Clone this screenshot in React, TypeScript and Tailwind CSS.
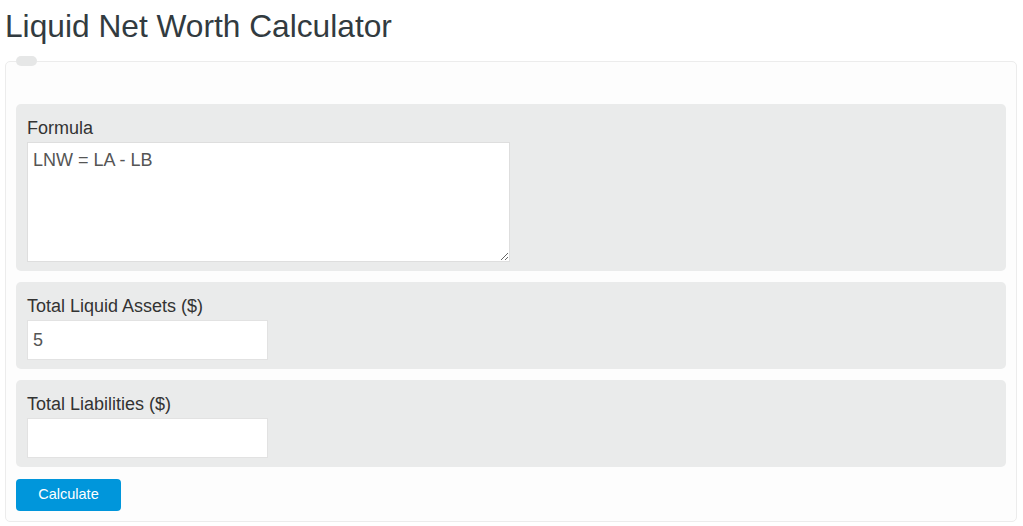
import React from "react";

export default function App() {
  const font = { fontFamily: '"Liberation Sans", Arial, sans-serif' };
  return (
    <div className="min-h-[526px] w-[1023px] bg-white pl-[5px]" style={font}>
      <h1 className="pt-[8px] text-[31.7px] leading-[37px] font-normal text-[#323b40]">
        Liquid Net Worth Calculator
      </h1>
      <div className="relative mt-[16px] w-[1012px] rounded-[5px] border border-[#ececec] bg-[#fdfdfd] px-[10px] pt-[42px] pb-[10px]">
        <div className="absolute left-[10px] top-[-6px] h-[10px] w-[21px] rounded-full bg-[#e6e7e7]" />
        <div className="flex flex-col gap-[11px]">
          <div className="rounded-[5px] bg-[#eaebeb] px-[11px] pt-[11px] pb-[9px]">
            <div className="text-[18px] leading-[27px] text-[#333]">Formula</div>
            <textarea
              className="block h-[120px] w-[483px] border border-[#dedede] bg-white px-[5px] py-[6px] text-[18px] leading-[23px] text-[#555] outline-none"
              style={font}
              defaultValue="LNW = LA - LB"
            />
          </div>
          <div className="rounded-[5px] bg-[#eaebeb] px-[11px] pt-[11px] pb-[9px]">
            <div className="text-[18px] leading-[27px] text-[#333]">Total Liquid Assets ($)</div>
            <input
              className="block h-[40px] w-[241px] border border-[#e2e2e2] bg-white px-[5px] text-[18px] text-[#555] outline-none"
              style={font}
              defaultValue="5"
            />
          </div>
          <div className="rounded-[5px] bg-[#eaebeb] px-[11px] pt-[11px] pb-[9px]">
            <div className="text-[18px] leading-[27px] text-[#333]">Total Liabilities ($)</div>
            <input
              className="block h-[40px] w-[241px] border border-[#e2e2e2] bg-white px-[5px] text-[18px] text-[#555] outline-none"
              style={font}
              defaultValue=""
            />
          </div>
        </div>
        <button
          className="mt-[12px] block h-[32px] w-[105px] rounded-[4px] bg-[#0096db] text-[14.5px] text-white"
          style={font}
        >
          Calculate
        </button>
      </div>
    </div>
  );
}
